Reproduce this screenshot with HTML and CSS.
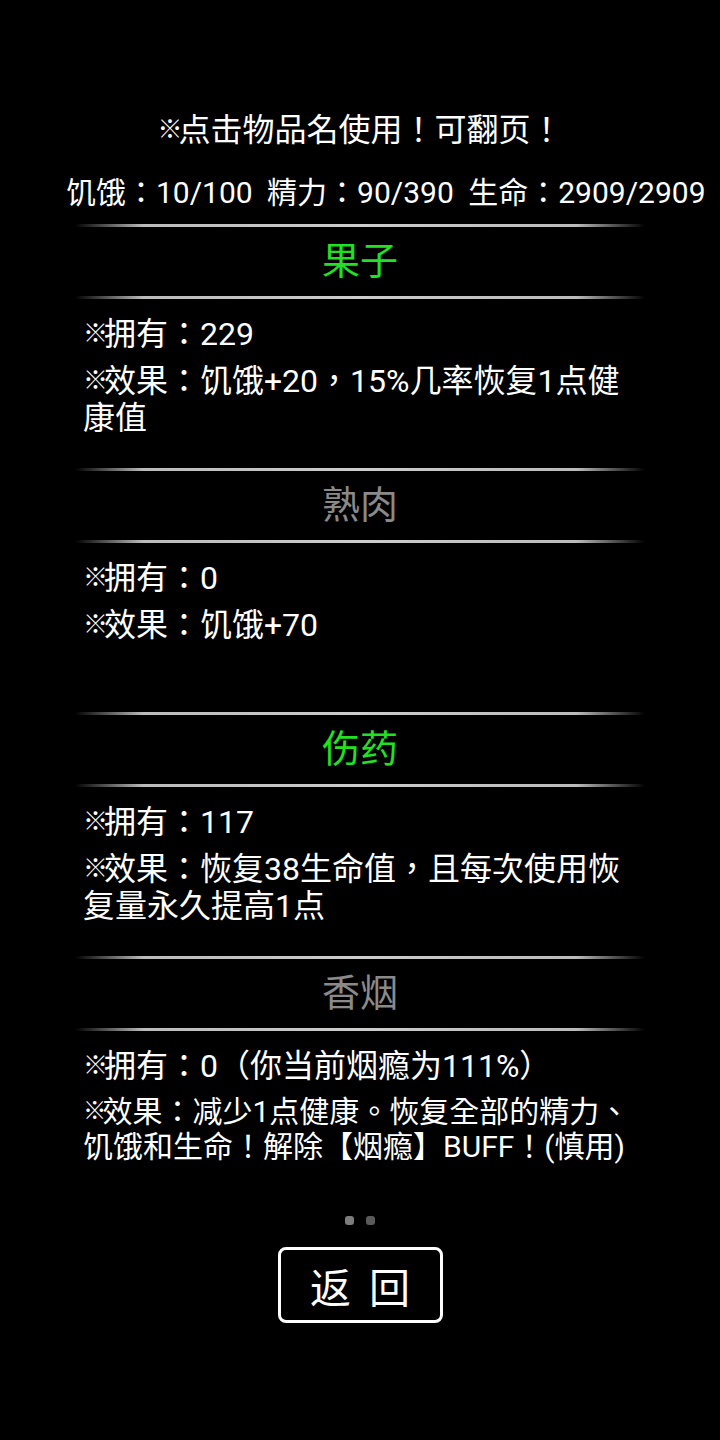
FILE: index.html
```html
<!DOCTYPE html>
<html lang="zh-CN">
<head>
    <meta charset="UTF-8">
    <meta name="viewport" content="width=device-width, initial-scale=1.0">
    <title>物品</title>
    <link rel="stylesheet" href="styles.css">
</head>
<body>
    <div class="screen">
        <div class="tip"><span class="mark">※</span>点击物品名使用！可翻页！</div>
        <div class="stats">饥饿：10/100 精力：90/390 生命：2909/2909</div>

        <div class="items">
            <div class="item">
                <div class="line"></div>
                <div class="name green">果子</div>
                <div class="line"></div>
                <div class="body">
                    <div class="own"><span class="mark">※</span>拥有：229</div>
                    <div class="effect"><span class="mark">※</span>效果：饥饿+20，15%几率恢复1点健<br>康值</div>
                </div>
            </div>
            <div class="item">
                <div class="line"></div>
                <div class="name gray">熟肉</div>
                <div class="line"></div>
                <div class="body">
                    <div class="own"><span class="mark">※</span>拥有：0</div>
                    <div class="effect"><span class="mark">※</span>效果：饥饿+70</div>
                </div>
            </div>
            <div class="item">
                <div class="line"></div>
                <div class="name green">伤药</div>
                <div class="line"></div>
                <div class="body">
                    <div class="own"><span class="mark">※</span>拥有：117</div>
                    <div class="effect"><span class="mark">※</span>效果：恢复38生命值，且每次使用恢<br>复量永久提高1点</div>
                </div>
            </div>
            <div class="item">
                <div class="line"></div>
                <div class="name gray">香烟</div>
                <div class="line"></div>
                <div class="body">
                    <div class="own"><span class="mark">※</span>拥有：0（你当前烟瘾为111%）</div>
                    <div class="effect small"><span class="mark">※</span>效果：减少1点健康。恢复全部的精力、<br>饥饿和生命！解除【烟瘾】BUFF！(慎用)</div>
                </div>
            </div>
        </div>

        <div class="dots">
            <span class="dot on"></span>
            <span class="dot"></span>
        </div>

        <div class="actions">
            <button class="back" onclick="history.back()">返 回</button>
        </div>
    </div>
</body>
</html>
```

FILE: styles.css
```css
* {
    margin: 0;
    padding: 0;
    box-sizing: border-box;
}
body, html {
    width: 100%;
    height: 100%;
    background-color: #000;
}
.screen {
    width: 720px;
    height: 1440px;
    color: #fff;
    font-family: Roboto, "Noto Sans CJK TC", sans-serif;
    font-feature-settings: "locl" 0;
    padding-top: 110px;
    overflow: hidden;
}
.mark {
    font-size: 0.78em;
    line-height: 1;
    letter-spacing: -4px;
    vertical-align: 0.12em;
}
.tip {
    font-size: 32px;
    line-height: 40px;
    text-align: center;
}
.stats {
    font-size: 30px;
    line-height: 40px;
    margin-top: 23px;
    padding-left: 66px;
    word-spacing: 7px;
    white-space: nowrap;
}
.items {
    margin-top: 11px;
    padding: 0 75px;
}
.item {
    height: 244px;
}
.line {
    height: 3px;
    background: linear-gradient(to right, rgba(200,200,200,0), #bbb 12%, #ccc 50%, #bbb 88%, rgba(200,200,200,0));
}
.name {
    height: 69px;
    line-height: 69px;
    font-size: 38px;
    text-align: center;
}
.green {
    color: #22e022;
}
.gray {
    color: #8a8a8a;
}
.body {
    height: 169px;
    padding: 0 5px 0 8px;
    font-size: 32px;
}
.own {
    line-height: 37px;
    padding-top: 17px;
    white-space: nowrap;
}
.effect {
    line-height: 37px;
    margin-top: 10px;
    white-space: nowrap;
}
.effect.small {
    font-size: 30px;
    line-height: 35px;
    margin-top: 9px;
}
.dots {
    display: flex;
    justify-content: center;
    gap: 12px;
    margin-top: 16px;
}
.dot {
    width: 9px;
    height: 9px;
    border-radius: 3px;
    background-color: #5a5a5a;
}
.dot.on {
    background-color: #7c7c7c;
}
.actions {
    display: flex;
    justify-content: center;
    margin-top: 22px;
}
.back {
    width: 165px;
    height: 76px;
    border: 3px solid #fff;
    border-radius: 8px;
    background-color: #000;
    color: #fff;
    font-family: Roboto, "Noto Sans CJK TC", sans-serif;
    font-size: 41px;
    letter-spacing: 4px;
    padding-left: 4px;
    cursor: pointer;
}
```
